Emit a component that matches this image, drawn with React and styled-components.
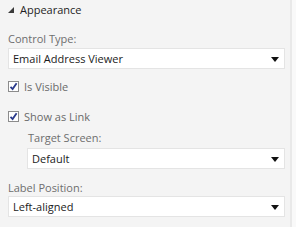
import React from "react";
import styled, { createGlobalStyle } from "styled-components";

const Global = createGlobalStyle`
  html, body { margin: 0; padding: 0; background: #f4f4f4; }
  body { font-family: "Open Sans", "Noto Sans", sans-serif; }
`;

const Panel = styled.div`
  width: 296px;
  height: 227px;
  box-sizing: border-box;
  background: #f4f4f4;
  border-right: 4px solid #f9f9f9;
  display: flex;
`;

const Content = styled.div`
  flex: 1;
  border-right: 2px solid #e9e9e9;
  padding: 0 5px 0 8px;
  display: flex;
  flex-direction: column;
`;

const Header = styled.div`
  display: flex;
  align-items: center;
  gap: 6px;
  height: 18px;
  font-size: 11px;
  color: #1e1e1e;
`;

const Tri = styled.span`
  width: 0;
  height: 0;
  border-left: 6px solid transparent;
  border-bottom: 6px solid #3a3a3a;
  margin-top: 1px;
`;

const Label = styled.div`
  font-size: 11px;
  line-height: 15px;
  color: #6e6e6e;
  margin-top: ${(p) => p.$mt}px;
  margin-left: ${(p) => p.$indent || 0}px;
`;

const Select = styled.div`
  margin-top: ${(p) => p.$mt}px;
  margin-left: ${(p) => p.$indent || 0}px;
  height: 21px;
  box-sizing: border-box;
  background: #ffffff;
  border: 1px solid #e4e4e4;
  display: flex;
  align-items: center;
  justify-content: space-between;
  padding: 0 5px 0 4px;
  font-size: 11px;
  color: #1b1b1b;
`;

const Arrow = styled.span`
  width: 0;
  height: 0;
  border-left: 4px solid transparent;
  border-right: 4px solid transparent;
  border-top: 5px solid #111;
  margin-top: 1px;
`;

const CheckRow = styled.div`
  display: flex;
  align-items: center;
  gap: 5px;
  margin-top: ${(p) => p.$mt}px;
  height: 15px;
  font-size: 11px;
  color: #6a6a6a;
`;

const Box = styled.span`
  width: 11px;
  height: 11px;
  box-sizing: border-box;
  border: 1px solid #8c8c8c;
  background: #fff;
  display: flex;
  align-items: center;
  justify-content: center;
`;

function Check({ label, mt }) {
  return (
    <CheckRow $mt={mt}>
      <Box>
        <svg width="9" height="9" viewBox="0 0 9 9">
          <path d="M1.5 4.8 L3.6 7 L7.6 1.2" fill="none" stroke="#2a3a8c" strokeWidth="1.8" />
        </svg>
      </Box>
      {label}
    </CheckRow>
  );
}

export default function App() {
  return (
    <>
      <Global />
      <Panel>
        <Content>
          <Header>
            <Tri />
            Appearance
          </Header>
          <Label $mt={13}>Control Type:</Label>
          <Select $mt={2}>
            Email Address Viewer
            <Arrow />
          </Select>
          <Check mt={10} label="Is Visible" />
          <Check mt={15} label="Show as Link" />
          <Label $mt={6} $indent={20}>Target Screen:</Label>
          <Select $mt={3} $indent={19}>
            Default
            <Arrow />
          </Select>
          <Label $mt={11}>Label Position:</Label>
          <Select $mt={1}>
            Left-aligned
            <Arrow />
          </Select>
        </Content>
      </Panel>
    </>
  );
}
